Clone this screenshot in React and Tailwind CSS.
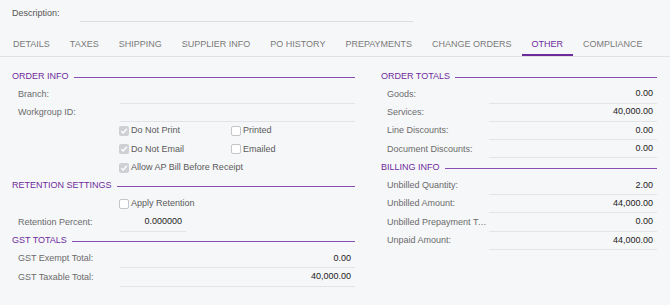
import React from 'react';

const tabs = ['DETAILS', 'TAXES', 'SHIPPING', 'SUPPLIER INFO', 'PO HISTORY', 'PREPAYMENTS', 'CHANGE ORDERS', 'OTHER', 'COMPLIANCE'];

const SectionHeader = ({ title }) => (
  <div className="flex items-center h-[18.3px] gap-[5px]">
    <span className="text-[#6e2b9c] text-[9px] leading-none whitespace-nowrap">{title}</span>
    <div className="flex-1 h-px bg-[#8a4db3] mt-[2px]" />
  </div>
);

const FieldRow = ({ label, value, fieldWidth }) => (
  <div className="flex items-center h-[18.3px] pl-[6px]">
    <div className="w-[102px] shrink-0 text-[#6b6b6b] text-[9px] whitespace-nowrap overflow-hidden text-ellipsis pr-[1px]">{label}</div>
    <div className={`${fieldWidth || 'flex-1'} h-full flex items-center justify-end pr-[4px] border-b border-[#e3e4e8] text-[9px] text-[#222]`}>
      {value}
    </div>
  </div>
);

const Check = ({ checked }) =>
  checked ? (
    <span className="w-[10px] h-[10px] rounded-[2px] bg-[#cfd0d3] flex items-center justify-center shrink-0">
      <svg width="8" height="8" viewBox="0 0 8 8">
        <path d="M1.3 4.2 L3.2 6 L6.8 1.8" stroke="#fff" strokeWidth="1.4" fill="none" />
      </svg>
    </span>
  ) : (
    <span className="w-[10px] h-[10px] rounded-[2px] bg-white border border-[#c4c5c9] shrink-0" />
  );

const CheckItem = ({ label, checked, width }) => (
  <div className={`flex items-center gap-[2px] ${width || ''}`}>
    <Check checked={checked} />
    <span className="text-[9px] text-[#5a5a5a] whitespace-nowrap">{label}</span>
  </div>
);

const CheckRow = ({ children }) => (
  <div className="flex items-center h-[18.3px] pl-[107px]">{children}</div>
);

export default function App() {
  return (
    <div className="w-[670px] h-[305px] bg-[#f6f7f9] overflow-hidden" style={{ fontFamily: '"Liberation Sans", Arial, sans-serif' }}>
      {/* Description */}
      <div className="flex items-end h-[22px] pl-[12px]">
        <span className="w-[68px] text-[9px] text-[#555] pb-[2px]">Description:</span>
        <div className="w-[333px] h-[14px] border-b border-[#dcdde1]" />
      </div>

      {/* Tabs */}
      <div className="flex items-end h-[35px] border-b border-[#e1e2e6] pl-[3px]">
        {tabs.map((t) => (
          <div
            key={t}
            className={`px-[10px] h-[18px] flex items-start text-[9px] whitespace-nowrap ${
              t === 'OTHER' ? 'text-[#6e2b9c] border-b-2 border-[#6e2b9c]' : 'text-[#7a7a7a]'
            }`}
          >
            {t}
          </div>
        ))}
      </div>

      <div className="flex pt-[10px]">
        {/* Left column */}
        <div className="w-[343px] ml-[12px]">
          <SectionHeader title="ORDER INFO" />
          <FieldRow label="Branch:" value="" />
          <FieldRow label="Workgroup ID:" value="" />
          <CheckRow>
            <CheckItem label="Do Not Print" checked width="w-[112px]" />
            <CheckItem label="Printed" />
          </CheckRow>
          <CheckRow>
            <CheckItem label="Do Not Email" checked width="w-[112px]" />
            <CheckItem label="Emailed" />
          </CheckRow>
          <CheckRow>
            <CheckItem label="Allow AP Bill Before Receipt" checked />
          </CheckRow>
          <SectionHeader title="RETENTION SETTINGS" />
          <CheckRow>
            <CheckItem label="Apply Retention" />
          </CheckRow>
          <FieldRow label="Retention Percent:" value="0.000000" fieldWidth="w-[66px]" />
          <SectionHeader title="GST TOTALS" />
          <FieldRow label="GST Exempt Total:" value="0.00" />
          <FieldRow label="GST Taxable Total:" value="40,000.00" />
        </div>

        {/* Right column */}
        <div className="w-[276px] ml-[26px]">
          <SectionHeader title="ORDER TOTALS" />
          <FieldRow label="Goods:" value="0.00" />
          <FieldRow label="Services:" value="40,000.00" />
          <FieldRow label="Line Discounts:" value="0.00" />
          <FieldRow label="Document Discounts:" value="0.00" />
          <SectionHeader title="BILLING INFO" />
          <FieldRow label="Unbilled Quantity:" value="2.00" />
          <FieldRow label="Unbilled Amount:" value="44,000.00" />
          <FieldRow label="Unbilled Prepayment Total:" value="0.00" />
          <FieldRow label="Unpaid Amount:" value="44,000.00" />
        </div>
      </div>
    </div>
  );
}
